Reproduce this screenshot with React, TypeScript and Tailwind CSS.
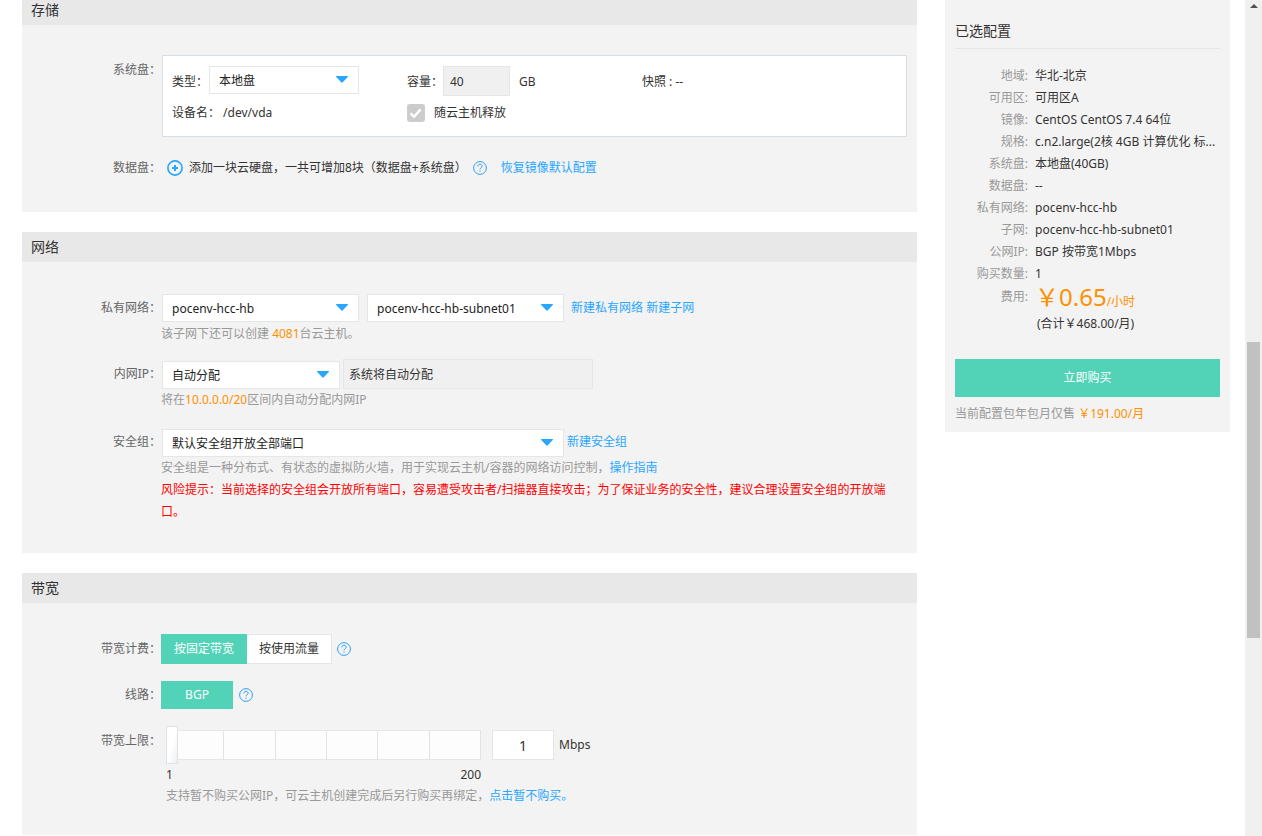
import * as React from 'react';
import clsx from 'clsx';

interface SelectProps {
	label: string;
	value: string;
	className?: string;
}

const Select = ({ label, value, className }: SelectProps) => (
	<div className={clsx('relative h-7', className)}>
		<select
			aria-label={label}
			className="block h-full w-full appearance-none border border-[#e6e6e6] bg-white pl-[9px] pr-7 pt-px text-[#222]"
		>
			<option>{value}</option>
		</select>
		<svg
			className="pointer-events-none absolute right-[11px] top-[10px]"
			width="12"
			height="7"
			viewBox="0 0 12 7"
			fill="#29a7ff"
		>
			<path d="M.6 0h10.8c.6 0 .8.6.4 1L6.8 6.3c-.5.5-1.1.5-1.6 0L.2 1C-.2.6 0 0 .6 0z" />
		</svg>
	</div>
);

const HelpIcon = () => (
	<svg className="shrink-0" width="14" height="14" viewBox="0 0 14 14" fill="none" stroke="#2d9ff5">
		<circle cx="7" cy="7" r="6.4" />
		<path d="M4.9 5.4c0-1.3.9-2.1 2.1-2.1s2.1.8 2.1 1.9c0 1.5-2.1 1.5-2.1 3.2" />
		<path d="M7 9.6v1.2" />
	</svg>
);

const HelpButton = () => (
	<button type="button" aria-label="帮助" className="flex">
		<HelpIcon />
	</button>
);

const BlueLink = ({ children }: { children: React.ReactNode }) => (
	<a href="#" className="text-[#29a7ff]">
		{children}
	</a>
);

interface SectionProps {
	title: string;
	className?: string;
	children: React.ReactNode;
}

const Section = ({ title, className, children }: SectionProps) => (
	<section className="bg-[#f3f3f3]">
		<h2 className="h-[30px] bg-[#e8e8e8] px-[9px] text-sm leading-[30px]">{title}</h2>
		<div className={clsx('pr-[10px]', className)}>{children}</div>
	</section>
);

interface RowProps {
	label: string;
	className?: string;
	children: React.ReactNode;
}

const Row = ({ label, className, children }: RowProps) => (
	<div className={clsx('flex items-start', className)}>
		<div className="w-[139px] shrink-0 text-right leading-[30px] text-[#666]">{label}</div>
		<div className="min-w-0 flex-1">{children}</div>
	</div>
);

const Storage = () => (
	<Section title="存储" className="pb-[29px] pt-[30px]">
		<Row label="系统盘：">
			<div className="ml-px grid grid-cols-[235px_235px_1fr] gap-y-[6px] border border-[#d8e0e6] bg-white px-[9px] pb-[14px] pt-[10px]">
				<div className="flex h-8">
					<span className="w-[37px] leading-8">类型：</span>
					<Select label="类型" value="本地盘" className="w-[150px]" />
				</div>
				<div className="flex h-8">
					<label htmlFor="capacity" className="w-9 leading-8">
						容量：
					</label>
					<input
						id="capacity"
						className="h-[30px] w-[67px] border border-[#e6e6e6] bg-[#f0f0f0] px-[6px] text-[#333]"
						defaultValue="40"
						disabled
					/>
					<span className="ml-[9px] leading-8">GB</span>
				</div>
				<div className="leading-8">快照 : --</div>
				<div className="leading-[18px]">设备名： /dev/vda</div>
				<label className="flex items-center gap-[9px] leading-[18px]">
					<span className="relative h-[18px] w-[18px]">
						<input
							type="checkbox"
							defaultChecked
							disabled
							className="block h-[18px] w-[18px] appearance-none rounded-[3px] bg-[#ccc]"
						/>
						<svg
							className="pointer-events-none absolute inset-0"
							viewBox="0 0 18 18"
							fill="none"
							stroke="#fff"
							strokeWidth="2.4"
						>
							<path d="M3.6 9.4l3.4 3.4 6.6-7.4" />
						</svg>
					</span>
					随云主机释放
				</label>
			</div>
		</Row>
		<Row label="数据盘：" className="mt-4">
			<div className="flex h-[30px] items-center">
				<button type="button" className="ml-[6px] flex items-center gap-[6px]">
					<svg width="16" height="16" viewBox="0 0 16 16" fill="none" stroke="#29a7ff">
						<circle cx="8" cy="8" r="7.1" strokeWidth="1.7" />
						<path d="M8 5v6M5 8h6" strokeWidth="2" />
					</svg>
					添加一块云硬盘，一共可增加8块（数据盘+系统盘）
				</button>
				<span className="ml-[6px] mr-[14px]">
					<HelpButton />
				</span>
				<BlueLink>恢复镜像默认配置</BlueLink>
			</div>
		</Row>
	</Section>
);

const Network = () => (
	<Section title="网络" className="pb-[30px] pt-[31px]">
		<Row label="私有网络：">
			<div className="ml-px flex h-[30px] items-center">
				<Select label="私有网络" value="pocenv-hcc-hb" className="mr-2 w-[197px]" />
				<Select label="子网" value="pocenv-hcc-hb-subnet01" className="mr-[7px] w-[197px]" />
				<span>
					<BlueLink>新建私有网络</BlueLink> <BlueLink>新建子网</BlueLink>
				</span>
			</div>
			<p className="leading-[22px] text-[#999]">
				该子网下还可以创建 <span className="text-[#ff9000]">4081</span>台云主机。
			</p>
		</Row>
		<Row label="内网IP：" className="mt-[14px]">
			<div className="ml-px flex h-[30px] items-end">
				<Select label="内网IP" value="自动分配" className="mr-[3px] w-[178px]" />
				<input
					aria-label="内网IP地址"
					className="h-full w-[250px] border border-[#e6e6e6] bg-[#f0f0f0] px-[5px]"
					defaultValue="系统将自动分配"
					disabled
				/>
			</div>
			<p className="leading-[22px] text-[#999]">
				将在<span className="text-[#ff9000]">10.0.0.0/20</span>区间内自动分配内网IP
			</p>
		</Row>
		<Row label="安全组：" className="mt-4">
			<div className="ml-px flex h-[30px] items-end">
				<Select label="安全组" value="默认安全组开放全部端口" className="mr-[3px] w-[402px]" />
				<span className="leading-[30px]">
					<BlueLink>新建安全组</BlueLink>
				</span>
			</div>
			<p className="leading-[22px] text-[#999]">
				安全组是一种分布式、有状态的虚拟防火墙，用于实现云主机/容器的网络访问控制，
				<BlueLink>操作指南</BlueLink>
			</p>
			<p className="pr-[10px] leading-[22px] text-[#f00]">
				风险提示：当前选择的安全组会开放所有端口，容易遭受攻击者/扫描器直接攻击；为了保证业务的安全性，建议合理设置安全组的开放端口。
			</p>
		</Row>
	</Section>
);

const Bandwidth = () => (
	<Section title="带宽" className="pb-[29px] pt-[31px]">
		<Row label="带宽计费：">
			<div className="flex h-[30px] items-center">
				<button type="button" className="h-full w-[86px] bg-[#52d3b7] text-white">
					按固定带宽
				</button>
				<button
					type="button"
					className="mr-[5px] h-full w-[85px] border border-l-0 border-[#e6e6e6] bg-white"
				>
					按使用流量
				</button>
				<HelpButton />
			</div>
		</Row>
		<Row label="线路：" className="mt-4">
			<div className="flex h-[30px] items-center">
				<button type="button" className="mr-[6px] h-7 w-[72px] bg-[#52d3b7] text-white">
					BGP
				</button>
				<HelpButton />
			</div>
		</Row>
		<Row label="带宽上限：" className="mt-4">
			<div className="ml-[5px] flex h-[38px] items-center">
				<div className="relative mr-[11px] flex h-full w-[315px] items-center pl-[7px]">
					<div className="grid h-[30px] flex-1 grid-cols-6 border-y border-[#e6e6e6] bg-[#fdfdfd]">
						{[1, 2, 3, 4, 5, 6].map((step) => (
							<div key={step} className="border-r border-[#dce3e9]" />
						))}
					</div>
					<input
						type="range"
						aria-label="带宽上限"
						min={1}
						max={200}
						defaultValue={1}
						className="absolute inset-0 h-full w-full appearance-none bg-transparent [&::-webkit-slider-thumb]:h-[38px] [&::-webkit-slider-thumb]:w-3 [&::-webkit-slider-thumb]:appearance-none [&::-webkit-slider-thumb]:border [&::-webkit-slider-thumb]:border-[#dce3e9] [&::-webkit-slider-thumb]:bg-linear-to-br [&::-webkit-slider-thumb]:from-white [&::-webkit-slider-thumb]:from-50% [&::-webkit-slider-thumb]:to-[#eceff2]"
					/>
				</div>
				<input
					id="mbps"
					className="mr-[5px] h-[30px] w-[62px] border border-[#e6e6e6] bg-white text-center text-sm"
					defaultValue="1"
				/>
				<label htmlFor="mbps">Mbps</label>
			</div>
			<div className="ml-[5px] flex w-[315px] justify-between leading-[22px]">
				<span>1</span>
				<span>200</span>
			</div>
			<p className="ml-[5px] leading-5 text-[#999]">
				支持暂不购买公网IP，可云主机创建完成后另行购买再绑定，<BlueLink>点击暂不购买。</BlueLink>
			</p>
		</Row>
	</Section>
);

const summary = [
	['地域', '华北-北京'],
	['可用区', '可用区A'],
	['镜像', 'CentOS CentOS 7.4 64位'],
	['规格', 'c.n2.large(2核 4GB 计算优化 标...'],
	['系统盘', '本地盘(40GB)'],
	['数据盘', '--'],
	['私有网络', 'pocenv-hcc-hb'],
	['子网', 'pocenv-hcc-hb-subnet01'],
	['公网IP', 'BGP 按带宽1Mbps'],
	['购买数量', '1'],
];

const Summary = () => (
	<aside className="w-[285px] shrink-0 self-start bg-[#f3f3f3] px-[10px] pb-[7px] pt-[14px]">
		<h2 className="border-b border-[#e6e6e6] text-sm leading-[34px]">已选配置</h2>
		<dl className="mt-4 grid grid-cols-[73px_1fr] gap-x-[7px] leading-[22px]">
			{summary.map(([name, value]) => (
				<React.Fragment key={name}>
					<dt className="text-right text-[#999]">{name}:</dt>
					<dd className="whitespace-nowrap">{value}</dd>
				</React.Fragment>
			))}
			<dt className="text-right leading-6 text-[#999]">费用:</dt>
			<dd>
				<div className="flex h-6 items-baseline text-[#ff9000]">
					<span className="text-2xl leading-6">￥0.65</span>
					<span className="leading-4">/小时</span>
				</div>
				<div className="mt-1 pl-[2px]">(合计￥468.00/月)</div>
			</dd>
		</dl>
		<button type="button" className="mt-6 h-[38px] w-full bg-[#52d3b7] text-white">
			立即购买
		</button>
		<p className="mt-[6px] leading-[22px] text-[#999]">
			当前配置包年包月仅售 <span className="text-[#ff9000]">￥191.00/月</span>
		</p>
	</aside>
);

const Scrollbar = () => (
	<div className="sticky top-0 flex h-screen w-[17px] shrink-0 flex-col items-center bg-[#f0f0f0] pt-1">
		<svg width="8" height="4" viewBox="0 0 8 4" fill="#505050">
			<path d="M4 0l4 4H0z" />
		</svg>
		<div className="mt-[334px] h-[296px] w-[13px] bg-[#c1c1c1]" />
	</div>
);

export default function App() {
	return (
		<div className="flex overflow-clip bg-white pl-[22px] font-['Noto_Sans','Noto_Sans_CJK_SC',sans-serif] text-xs text-[#333]">
			<main className="-mt-[5px] mr-7 flex min-w-0 flex-1 flex-col gap-5">
				<Storage />
				<Network />
				<Bandwidth />
			</main>
			<div className="mr-[15px] flex">
				<Summary />
			</div>
			<Scrollbar />
		</div>
	);
}
